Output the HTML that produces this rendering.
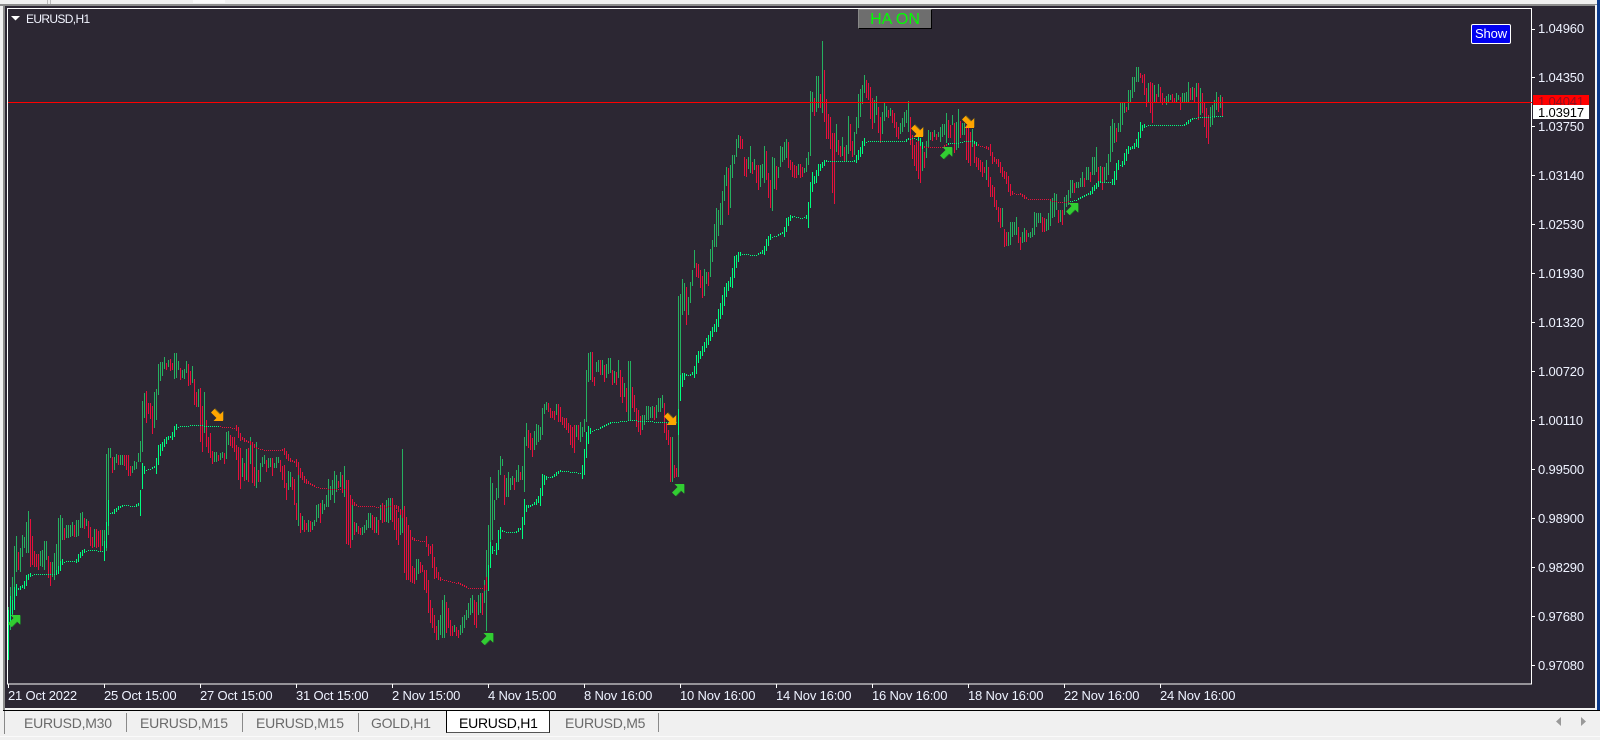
<!DOCTYPE html>
<html><head><meta charset="utf-8">
<style>
html,body{margin:0;padding:0;width:1600px;height:740px;overflow:hidden;background:#f0f0f0;font-family:"Liberation Sans",sans-serif}
.a{position:absolute}
.p{position:absolute;left:1538px;width:56px;height:16px;line-height:16px;font-size:13px;color:#eef2ff;letter-spacing:-.15px;white-space:nowrap}
.t{position:absolute;top:688px;height:16px;line-height:16px;font-size:13px;color:#eef2ff;letter-spacing:-.17px;white-space:nowrap}
.tab{position:absolute;top:714px;height:18px;line-height:18px;font-size:14px;color:#6a6a6a;letter-spacing:-.25px;white-space:nowrap}
.sep{position:absolute;top:713px;width:1px;height:19px;background:#8a8a8a}
</style></head><body>
<div class="a" style="left:0;top:0;width:1600px;height:4px;background:#f0f0f0"></div>
<div class="a" style="left:47px;top:0;width:1px;height:4px;background:#bbb"></div>
<div class="a" style="left:50px;top:0;width:1px;height:4px;background:#bbb"></div>
<div class="a" style="left:193px;top:0;width:32px;height:3px;background:#fafafa;border:0 solid #ccc"></div>
<div class="a" style="left:0;top:4px;width:1597px;height:2px;background:#8c8c8c"></div>
<div class="a" style="left:3px;top:4px;width:2px;height:706px;background:#8c8c8c"></div>
<div class="a" style="left:1597px;top:0;width:3px;height:710px;background:#0b3a8c"></div>
<div class="a" style="left:1595px;top:5px;width:2px;height:705px;background:#f4f4f4"></div>
<div class="a" style="left:5px;top:6px;width:1590px;height:702px;background:#2c2733"></div>
<div class="a" style="left:5px;top:708px;width:1590px;height:2px;background:#f4f4f4"></div>
<div class="a" style="left:3px;top:710px;width:1597px;height:1px;background:#000"></div>

<svg class="a" id="c" style="left:0;top:0" width="1600" height="740" viewBox="0 0 1600 740" xmlns="http://www.w3.org/2000/svg">
<rect x="7.5" y="8.5" width="1524" height="675.5" fill="none" stroke="#fff" stroke-width="1" shape-rendering="crispEdges"/>
<g id="bars" shape-rendering="crispEdges"></g>
<rect x="8" y="102" width="1524" height="1" fill="#f00"/>
<g id="ticks" fill="#fff"></g>
<defs>
<polygon id="up" points="2.5,0 12,0 12,9.5 9,6.5 3.5,12 0,8.5 5.5,3"/>
<polygon id="dn" points="2.5,12 12,12 12,2.5 9,5.5 3.5,0 0,3.5 5.5,9"/>
</defs>
<g id="arrows"></g>
<polygon points="11,16 20,16 15.5,20.5" fill="#fff"/>
</svg>

<div class="a" style="left:26px;top:11px;height:16px;line-height:16px;font-size:12px;color:#f2f4ff;letter-spacing:-.65px;white-space:nowrap">EURUSD,H1</div>

<div class="a" style="left:858px;top:9px;width:72px;height:18px;background:#6e6e6e;border-top:1px solid #888;border-left:1px solid #888;border-right:1px solid #000;border-bottom:1px solid #000;box-sizing:content-box;line-height:20px;text-align:center;font-size:16px;color:#00ff00;white-space:nowrap">HA ON</div>

<div class="a" style="left:1471px;top:24px;width:38px;height:18px;background:#0000f0;border:1px solid #fff;border-radius:2px;line-height:18px;text-align:center;font-size:13px;letter-spacing:-.1px;color:#fff;white-space:nowrap">Show</div>

<div class="p" style="top:21px">1.04960</div>
<div class="p" style="top:70px">1.04350</div>
<div class="p" style="top:119px">1.03750</div>
<div class="p" style="top:168px">1.03140</div>
<div class="p" style="top:217px">1.02530</div>
<div class="p" style="top:266px">1.01930</div>
<div class="p" style="top:315px">1.01320</div>
<div class="p" style="top:364px">1.00720</div>
<div class="p" style="top:413px">1.00110</div>
<div class="p" style="top:462px">0.99500</div>
<div class="p" style="top:511px">0.98900</div>
<div class="p" style="top:560px">0.98290</div>
<div class="p" style="top:609px">0.97680</div>
<div class="p" style="top:658px">0.97080</div>

<div class="a" style="left:1533px;top:95px;width:56px;height:10px;background:#f00;overflow:hidden"><div style="position:absolute;left:5px;top:-1px;line-height:16px;font-size:13px;color:#8a1020;letter-spacing:-.15px;white-space:nowrap">1.04041</div></div>
<div class="a" style="left:1533px;top:105px;width:56px;height:14px;background:#fff;line-height:16px;font-size:13px;color:#000;letter-spacing:-.15px;white-space:nowrap;text-indent:5px;overflow:hidden">1.03917</div>

<div class="t" style="left:8px">21 Oct 2022</div>
<div class="t" style="left:104px">25 Oct 15:00</div>
<div class="t" style="left:200px">27 Oct 15:00</div>
<div class="t" style="left:296px">31 Oct 15:00</div>
<div class="t" style="left:392px">2 Nov 15:00</div>
<div class="t" style="left:488px">4 Nov 15:00</div>
<div class="t" style="left:584px">8 Nov 16:00</div>
<div class="t" style="left:680px">10 Nov 16:00</div>
<div class="t" style="left:776px">14 Nov 16:00</div>
<div class="t" style="left:872px">16 Nov 16:00</div>
<div class="t" style="left:968px">18 Nov 16:00</div>
<div class="t" style="left:1064px">22 Nov 16:00</div>
<div class="t" style="left:1160px">24 Nov 16:00</div>

<div class="a" style="left:4px;top:711px;width:1px;height:23px;background:#888"></div>
<div class="tab" style="left:24px">EURUSD,M30</div><div class="sep" style="left:126px"></div>
<div class="tab" style="left:140px">EURUSD,M15</div><div class="sep" style="left:242px"></div>
<div class="tab" style="left:256px">EURUSD,M15</div><div class="sep" style="left:358px"></div>
<div class="tab" style="left:371px">GOLD,H1</div>
<div class="a" style="left:446px;top:710px;width:104px;height:23px;background:#fff;border-left:1px solid #000;border-right:1px solid #222;border-top:1px solid #000;border-bottom:1px solid #555;box-sizing:border-box"></div>
<div class="tab" style="left:459px;color:#000">EURUSD,H1</div>
<div class="tab" style="left:565px">EURUSD,M5</div><div class="sep" style="left:658px"></div>
<div class="a" style="left:0;top:736px;width:1600px;height:1px;background:#fafafa"></div>
<svg class="a" style="left:1550px;top:714px" width="45" height="16"><polygon points="6,7.5 11,3 11,12" fill="#999"/><polygon points="31,3 36,7.5 31,12" fill="#999"/></svg>

<script>
(function(){
var K=[8,607,660,10,587,630,12,577,617,14,546,607,16,536,572,18,552,570,20,548,572,22,535,557,24,537,548,26,522,553,28,511,553,30,519,567,32,536,565,34,551,567,36,554,567,38,554,570,40,551,566,42,550,567,44,541,570,46,541,560,48,556,578,50,562,586,52,562,577,54,553,580,56,544,570,58,518,573,60,515,566,62,518,540,64,528,540,66,525,538,70,525,537,72,522,536,74,525,537,76,520,537,78,520,536,80,513,528,82,512,528,84,518,529,86,519,526,88,521,538,90,527,546,92,537,548,94,529,547,96,529,548,98,531,547,100,530,552,102,530,546,104,530,545,
106,454,551,108,448,535,110,448,458,112,457,473,114,457,470,116,454,463,118,455,465,120,455,465,122,455,465,124,455,466,126,455,470,128,455,476,130,466,476,132,466,473,134,461,470,136,462,469,138,453,462,140,441,462,142,401,452,144,393,418,146,391,423,148,403,414,150,403,419,152,406,434,154,392,428,156,389,420,158,364,395,160,362,381,162,362,376,164,357,369,166,363,370,168,360,367,170,359,371,172,363,370,174,353,379,176,353,378,178,361,370,180,368,380,182,370,378,184,369,379,186,361,373,188,364,386,190,371,385,192,366,383,194,379,405,196,392,407,198,389,407,200,388,442,202,406,452,204,392,433,206,420,447,208,437,453,210,433,458,212,451,464,214,452,462,216,452,462,218,455,461,220,453,460,222,452,458,224,453,464,226,432,459,228,431,445,230,435,446,232,437,448,234,437,452,236,445,460,238,447,480,240,448,489,242,458,477,244,463,481,246,449,480,248,448,482,250,437,464,252,442,483,254,467,486,256,442,488,258,470,482,260,463,482,262,457,467,264,455,464,266,460,472,268,458,468,270,458,467,272,458,476,274,463,468,276,457,468,278,457,463,280,460,472,282,466,480,284,465,488,286,483,500,288,471,490,290,472,487,292,477,490,294,479,505,296,503,520,298,468,526,
300,513,533,302,516,530,304,520,532,306,523,530,308,520,532,310,521,532,312,522,530,314,520,526,316,505,522,318,504,518,320,503,523,322,500,514,324,504,510,326,495,507,328,479,507,330,486,500,332,480,495,334,471,503,336,475,492,338,481,488,340,472,487,342,475,493,344,466,497,346,480,544,348,480,545,350,497,548,352,500,540,354,522,535,356,523,532,358,526,534,360,528,535,362,527,535,364,525,533,366,520,530,368,513,528,370,513,528,372,515,530,374,517,533,376,517,533,378,520,535,380,505,520,382,503,523,384,505,522,386,500,522,388,498,523,390,498,520,392,498,522,394,505,530,396,510,540,398,518,545,400,512,535,402,449,533,404,506,573,406,520,580,408,528,580,410,530,582,412,566,583,414,568,584,416,559,580,418,559,574,420,562,573,422,565,572,424,570,590,426,570,593,428,580,613,430,600,623,432,608,628,434,615,633,436,626,640,438,620,640,440,615,635,442,600,638,444,595,638,446,602,633,448,608,628,450,620,636,452,626,636,454,625,632,456,627,636,458,630,638,460,625,635,462,617,633,464,615,628,466,610,620,468,603,618,470,598,615,472,595,613,474,600,625,476,602,628,478,595,615,480,593,613,482,593,615,484,580,603,486,550,631,488,525,587,490,477,568,492,483,540,494,500,520,496,488,500,498,470,498,500,456,475,502,459,466,504,475,505,506,478,497,508,472,497,510,478,490,512,476,485,514,478,490,516,470,482,518,465,482,520,472,480,522,466,480,524,437,492,526,423,446,528,430,448,530,433,450,532,438,457,534,431,450,536,424,445,538,425,442,540,427,440,542,408,435,544,404,414,546,402,410,548,403,412,550,408,418,552,411,418,554,411,420,556,404,415,558,404,422,560,407,422,562,417,425,564,418,428,566,418,430,568,423,433,570,425,445,572,427,448,574,425,453,576,425,437,578,425,440,580,422,442,582,427,437,584,419,432,586,370,422,588,353,382,590,352,380,592,352,382,594,377,386,596,362,372,598,360,372,600,360,375,602,360,375,604,365,382,606,364,378,608,358,374,610,358,373,612,370,385,614,371,383,616,372,385,618,360,378,620,370,397,622,377,403,624,383,397,626,388,412,628,361,420,630,361,420,632,387,408,634,395,412,636,408,427,638,410,432,640,416,435,642,415,430,644,415,425,646,406,420,648,406,420,650,407,418,652,406,418,654,407,420,656,405,418,658,398,412,660,398,412,662,395,408,664,403,433,666,423,440,668,430,445,670,437,482,672,437,482,674,465,478,676,468,477,678,296,477,680,294,395,
682,279,315,684,283,311,686,287,325,688,297,315,690,282,303,692,270,286,694,250,268,696,263,277,698,264,278,700,270,288,702,276,298,704,269,296,706,272,284,708,272,286,710,249,277,712,240,262,714,224,247,716,208,247,718,210,236,720,203,225,722,191,225,724,175,201,726,167,186,728,168,215,730,165,208,732,155,178,734,155,164,736,139,157,738,135,148,740,136,149,742,139,149,744,157,176,746,159,177,748,157,169,750,146,173,752,162,174,754,159,170,756,165,183,758,165,190,760,165,187,762,164,178,764,146,183,766,151,180,768,173,198,770,180,208,772,157,211,774,158,189,776,166,190,778,167,178,780,146,167,782,147,162,784,142,160,786,139,158,788,142,168,790,160,170,792,162,177,794,165,178,796,166,178,798,164,175,800,164,178,802,167,177,804,168,173,806,158,172,808,152,165,810,91,156,812,92,112,814,98,116,816,76,112,818,76,108,820,94,108,822,41,113,824,70,122,826,99,139,828,114,139,830,117,149,832,133,193,834,133,204,836,124,152,838,140,155,840,146,157,842,137,156,844,147,161,846,145,162,848,116,154,850,124,151,852,141,157,854,132,155,856,117,134,858,94,128,860,89,117,862,85,104,864,75,93,866,80,98,868,83,100,870,87,119,872,98,129,874,100,123,876,96,115,878,107,133,880,117,143,882,112,134,884,102,121,886,106,117,888,110,118,890,108,116,892,110,123,894,113,128,896,122,137,898,127,139,900,123,134,902,118,132,904,112,127,906,110,123,908,101,132,910,117,145,912,135,159,914,145,166,916,142,171,918,138,179,920,142,183,922,144,171,924,152,168,926,141,158,928,130,148,930,132,140,932,132,141,934,130,137,936,134,140,938,132,137,940,127,142,942,124,137,944,124,135,946,113,143,948,120,138,950,125,138,952,115,125,954,123,153,956,122,150,958,109,148,960,121,138,962,123,135,964,123,135,966,125,160,968,123,163,970,132,166,972,129,147,974,143,163,976,157,167,978,158,170,980,160,172,982,162,177,984,167,173,986,160,180,988,167,187,990,177,197,992,185,197,994,187,207,996,200,210,998,207,222,1000,208,228,1002,208,227,1004,229,247,1006,232,246,1008,232,246,1010,222,245,1012,222,237,1014,222,235,1016,217,235,1018,227,243,1020,237,250,1022,232,243,1024,228,242,1026,230,242,1028,233,237,1030,232,238,1032,228,237,1034,212,235,1036,213,227,1038,213,223,1040,213,223,1042,217,232,1044,218,232,1046,219,231,1048,213,230,1050,200,226,1052,198,218,1054,193,217,1056,194,210,1058,210,223,1060,210,222,1062,210,225,1064,197,215,1066,195,207,1068,190,205,1070,180,198,1072,180,193,1074,183,193,1076,182,188,1078,182,188,1080,178,187,1082,172,187,1084,178,187,1086,167,180,1088,167,180,1090,172,182,1092,157,175,1094,157,175,1096,147,172,1098,167,182,1100,166,183,1102,167,190,1104,167,182,1106,163,180,1108,154,175,1110,126,162,1112,119,152,1114,123,143,1116,128,142,1118,123,132,1120,102,132,1122,102,125,1124,103,113,1126,107,112,1128,90,110,1130,90,103,1132,77,98,1134,77,92,1136,67,82,1138,67,82,1140,73,78,1142,75,83,1144,74,95,1146,88,107,1148,83,103,1150,82,113,1152,83,123,1154,85,103,1156,94,102,1158,84,97,1160,87,103,1162,93,105,1164,98,103,1166,96,105,1168,94,103,1170,95,100,1172,94,102,1174,98,103,1176,93,102,1178,95,100,1180,97,110,1182,93,103,1184,93,102,1186,92,102,1188,82,102,1190,88,100,1192,87,100,1194,88,102,1196,83,97,1198,83,120,1200,88,115,1202,93,113,1204,103,127,1206,108,138,1208,115,144,1210,107,127,1212,105,125,1214,100,118,1216,92,110,1218,97,112,1220,95,108,1222,97,116];
var L=[8,660,1,9,610,1,12,607,1,16,590,1,20,588,1,24,585,1,27,578,1,30,575,1,34,574,1,55,574,1,58,570,1,62,562,1,66,561,1,76,561,1,80,555,1,84,551,1,90,550,1,105,551,1,107,519,1,108,513,1,112,513,1,118,508,1,124,505,1,135,506,1,140,503,1,142,476,1,144,470,1,150,469,1,156,466,1,158,455,1,160,450,1,164,443,1,168,438,1,172,436,1,176,427,1,180,426,1,186,426,1,190,425,1,216,426,1,218,426,0,225,427,0,236,428,0,240,437,0,244,440,0,250,443,0,256,448,0,262,449,0,266,450,0,283,450,0,286,455,0,290,460,0,296,463,0,300,473,0,305,481,0,310,484,0,316,487,0,324,488,0,330,489,0,346,489,0,350,500,0,355,505,0,360,506,0,366,506,0,385,507,0,392,505,0,397,508,0,400,512,0,403,515,0,407,530,0,410,537,0,415,540,0,425,541,0,427,542,0,428,550,0,431,550,0,434,568,0,437,575,0,440,579,0,446,580,0,450,581,0,458,583,0,464,586,0,468,588,0,485,588,0,
487,578,1,488,578,1,490,555,1,492,550,1,496,549,1,498,540,1,500,533,1,502,531,1,510,532,1,516,532,1,518,530,1,522,528,1,524,512,1,527,507,1,532,505,1,536,502,1,540,497,1,542,485,1,544,480,1,547,477,1,552,477,1,556,474,1,560,471,1,565,471,1,580,473,1,583,471,1,586,445,1,588,435,1,590,431,1,594,430,1,600,428,1,604,426,1,608,424,1,612,422,1,616,422,1,622,421,1,630,420,1,660,422,1,678,422,1,680,388,1,682,380,1,685,375,1,690,375,1,694,372,1,698,357,1,700,355,1,714,328,1,716,325,1,720,311,1,722,305,1,725,292,1,728,286,1,732,278,1,734,267,1,737,259,1,740,254,1,745,254,1,755,255,1,760,253,1,762,252,1,765,250,1,766,245,1,770,237,1,775,236,1,780,234,1,784,232,1,786,225,1,790,218,1,793,216,1,800,218,1,806,217,1,808,215,1,810,195,1,812,182,1,814,180,1,816,176,1,818,170,1,822,165,1,826,161,1,855,161,1,858,155,1,861,150,1,864,142,1,868,141,1,905,141,1,908,139,1,912,138,1,918,139,1,923,147,0,942,147,0,946,145,1,950,143,1,958,143,1,964,141,1,972,141,1,976,144,0,980,146,0,985,147,0,990,150,0,992,158,0,998,163,0,1002,172,0,1006,178,0,1010,190,0,1012,193,0,1020,194,0,1024,197,0,1028,199,0,1048,199,0,1052,201,0,1064,202,0,1068,201,1,1076,200,1,1080,198,1,1084,196,1,1090,193,1,1094,188,1,1100,182,1,1112,182,1,1114,178,1,1118,165,1,1122,164,1,1128,150,1,1134,146,1,1138,140,1,1140,130,1,1144,126,1,1150,125,1,1184,125,1,1188,122,1,1192,119,1,1198,117,1,1222,116,1];
function interp(A,st,x){for(var i=0;i<A.length-st;i+=st){if(x>=A[i]&&x<=A[i+st]){var f=(A[i+st]-A[i])?(x-A[i])/(A[i+st]-A[i]):0;return [A[i+1]+f*(A[i+st+1]-A[i+1]),A[i+2]];}}return [A[1],A[2]];}
var gd='',rd='',id='',ir='',pm=null;
for(var x=8;x<=1222;x+=2){
  var hi=null,lo=null;
  for(var j=0;j<K.length;j+=3){if(K[j]==x){hi=K[j+1];lo=K[j+2];break;}if(K[j]<x&&K[j+3]>x){var f=(x-K[j])/(K[j+3]-K[j]);hi=K[j+1]+f*(K[j+4]-K[j+1]);lo=K[j+2]+f*(K[j+5]-K[j+2]);break;}}
  if(hi===null)continue;
  var m=(hi+lo)/2,seg='M'+(x+.5)+' '+Math.round(hi)+'V'+Math.round(lo);
  if(pm===null||m<=pm)gd+=seg;else rd+=seg;
  pm=m;
  var v=interp(L,3,x),yy=v[0],a=interp(L,3,Math.max(8,x-2))[0],b=interp(L,3,Math.min(1222,x+2))[0];
  var sl=Math.abs(a-b)/2,h=sl<.75?0:Math.min(13,1.3*sl);
  var t0=Math.round(yy-h),b0=Math.round(yy+h);
  if(x==8){t0=610;b0=660;}
  if(b0<=t0)b0=t0+1;
  var s='M'+(x+.5)+' '+t0+'V'+b0;
  if(v[1])id+=s;else ir+=s;
}
document.getElementById('bars').innerHTML='<path d="'+gd+'" stroke="#25b060" stroke-width="1" fill="none"/><path d="'+rd+'" stroke="#e6103c" stroke-width="1" fill="none"/><path d="'+ir+'" stroke="#e6103c" stroke-width="1" fill="none"/><path d="'+id+'" stroke="#00ff80" stroke-width="1" fill="none"/>';
var tk='';
[29,77,126,175,224,273,322,371,420,469,518,567,616,665].forEach(function(y){tk+='<rect x="1532" y="'+y+'" width="3" height="1"/>';});
for(var i=0;i<13;i++){tk+='<rect x="'+(8+96*i)+'" y="684" width="1" height="4"/>';}
document.getElementById('ticks').innerHTML=tk;
var ar='';
[[8,615],[481,633],[672,484],[940,147],[1066,203]].forEach(function(p){ar+='<use href="#up" x="'+(p[0]+.8)+'" y="'+(p[1]+.4)+'" fill="#1f7f2a"/><use href="#up" x="'+p[0]+'" y="'+p[1]+'" fill="#32cd32"/>';});
[[211,409],[664,413],[911,125],[962,116]].forEach(function(p){ar+='<use href="#dn" x="'+(p[0]+.6)+'" y="'+(p[1]-.8)+'" fill="#7d6a1e"/><use href="#dn" x="'+p[0]+'" y="'+p[1]+'" fill="#ffa500"/>';});
document.getElementById('arrows').innerHTML=ar;
})();
</script>
</body></html>
